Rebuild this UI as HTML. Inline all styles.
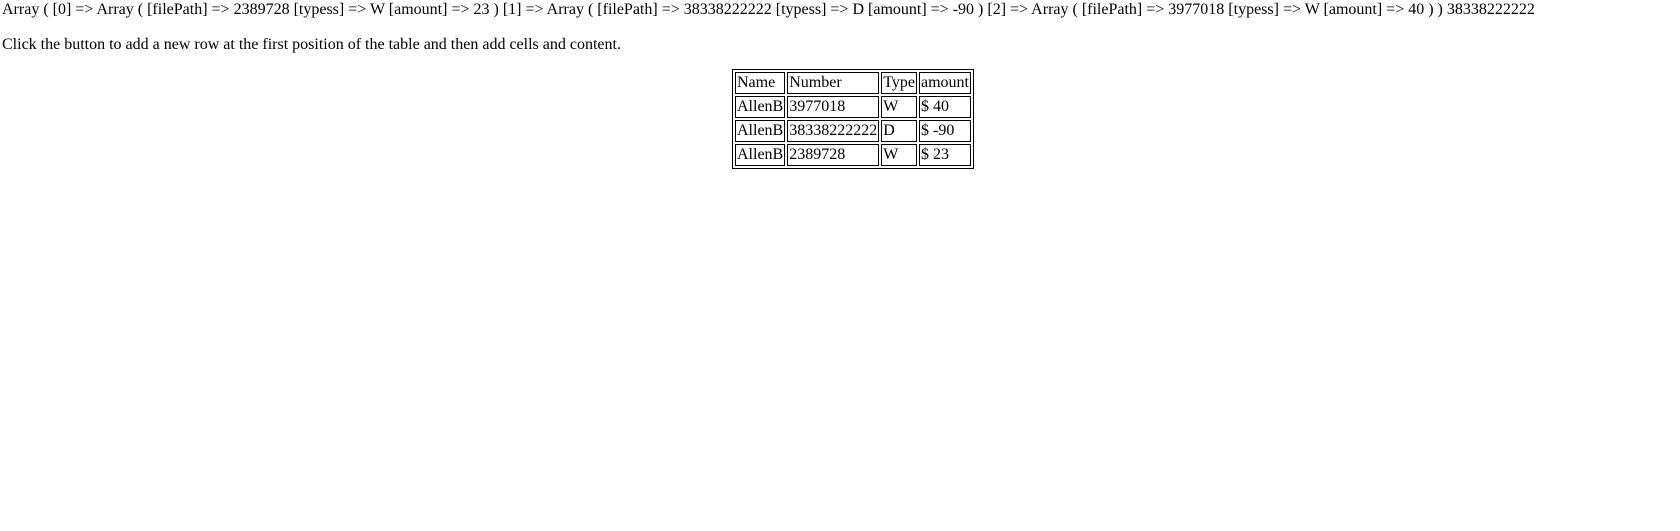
<!DOCTYPE html>
<html><head><style>
body{margin:0;font-family:"Liberation Serif",serif;font-size:16px;color:#000;background:#fff;width:1680px;height:531px;overflow:hidden;position:relative}
.l1{position:absolute;left:2px;top:1px;white-space:nowrap}
.l2{position:absolute;left:2px;top:36px;white-space:nowrap}
table{position:absolute;top:69px;left:732px;border:1px solid #000;border-spacing:2px}
td{border:1px solid #000;padding:1px;font-size:16px}
</style></head><body>
<div class="l1">Array ( [0] =&gt; Array ( [filePath] =&gt; 2389728 [typess] =&gt; W [amount] =&gt; 23 ) [1] =&gt; Array ( [filePath] =&gt; 38338222222 [typess] =&gt; D [amount] =&gt; -90 ) [2] =&gt; Array ( [filePath] =&gt; 3977018 [typess] =&gt; W [amount] =&gt; 40 ) ) 38338222222</div>
<div class="l2">Click the button to add a new row at the first position of the table and then add cells and content.</div>
<table>
<tr><td>Name</td><td>Number</td><td>Type</td><td>amount</td></tr>
<tr><td>AllenB</td><td>3977018</td><td>W</td><td>$ 40</td></tr>
<tr><td>AllenB</td><td>38338222222</td><td>D</td><td>$ -90</td></tr>
<tr><td>AllenB</td><td>2389728</td><td>W</td><td>$ 23</td></tr>
</table>
</body></html>
